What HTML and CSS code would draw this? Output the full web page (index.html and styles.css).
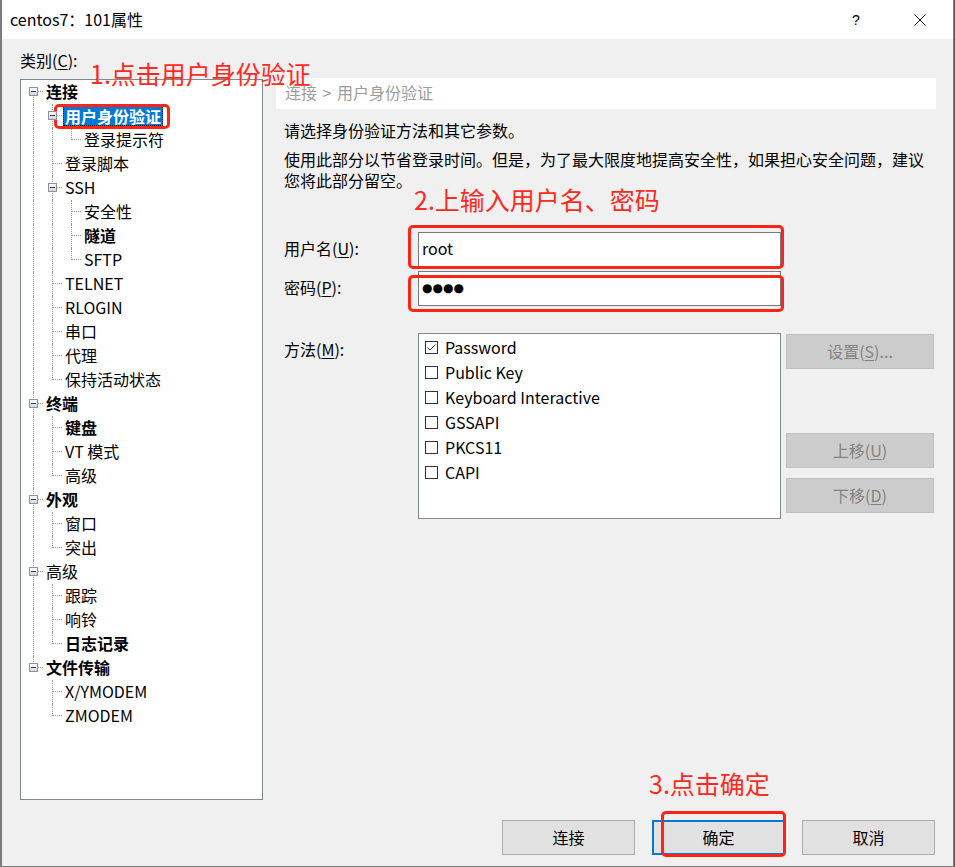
FILE: index.html
```html
<!DOCTYPE html>
<html lang="zh-CN">
<head>
<meta charset="utf-8">
<title>centos7：101属性</title>
<link rel="stylesheet" href="styles.css">
</head>
<body>
<div class="window">
  <div class="titlebar">
    <span class="title">centos7：101属性</span>
    <div class="tb-controls">
      <span class="tb-btn help">?</span>
      <span class="tb-btn close"><svg width="12" height="12" viewBox="0 0 12 12"><path d="M0.5 0.5 L11.5 11.5 M11.5 0.5 L0.5 11.5" stroke="#111" stroke-width="1" fill="none"/></svg></span>
    </div>
  </div>

  <div class="content">
    <div class="main">
      <div class="left">
        <div class="cat-label">类别(<u>C</u>):</div>
        <div class="tree">
          <div class="row"><span class="c f"><i class="box"></i></span><span class="lbl b">连接</span></div>
          <div class="row"><span class="c v"></span><span class="c t"><i class="box"></i></span><span class="lbl b sel">用户身份验证</span></div>
          <div class="row"><span class="c v"></span><span class="c v"></span><span class="c l"></span><span class="lbl">登录提示符</span></div>
          <div class="row"><span class="c v"></span><span class="c t"></span><span class="lbl">登录脚本</span></div>
          <div class="row"><span class="c v"></span><span class="c t"><i class="box"></i></span><span class="lbl">SSH</span></div>
          <div class="row"><span class="c v"></span><span class="c v"></span><span class="c t"></span><span class="lbl">安全性</span></div>
          <div class="row"><span class="c v"></span><span class="c v"></span><span class="c t"></span><span class="lbl b">隧道</span></div>
          <div class="row"><span class="c v"></span><span class="c v"></span><span class="c l"></span><span class="lbl">SFTP</span></div>
          <div class="row"><span class="c v"></span><span class="c t"></span><span class="lbl">TELNET</span></div>
          <div class="row"><span class="c v"></span><span class="c t"></span><span class="lbl">RLOGIN</span></div>
          <div class="row"><span class="c v"></span><span class="c t"></span><span class="lbl">串口</span></div>
          <div class="row"><span class="c v"></span><span class="c t"></span><span class="lbl">代理</span></div>
          <div class="row"><span class="c v"></span><span class="c l"></span><span class="lbl">保持活动状态</span></div>
          <div class="row"><span class="c t"><i class="box"></i></span><span class="lbl b">终端</span></div>
          <div class="row"><span class="c v"></span><span class="c t"></span><span class="lbl b">键盘</span></div>
          <div class="row"><span class="c v"></span><span class="c t"></span><span class="lbl">VT 模式</span></div>
          <div class="row"><span class="c v"></span><span class="c l"></span><span class="lbl">高级</span></div>
          <div class="row"><span class="c t"><i class="box"></i></span><span class="lbl b">外观</span></div>
          <div class="row"><span class="c v"></span><span class="c t"></span><span class="lbl">窗口</span></div>
          <div class="row"><span class="c v"></span><span class="c l"></span><span class="lbl">突出</span></div>
          <div class="row"><span class="c t"><i class="box"></i></span><span class="lbl">高级</span></div>
          <div class="row"><span class="c v"></span><span class="c t"></span><span class="lbl">跟踪</span></div>
          <div class="row"><span class="c v"></span><span class="c t"></span><span class="lbl">响铃</span></div>
          <div class="row"><span class="c v"></span><span class="c l"></span><span class="lbl b">日志记录</span></div>
          <div class="row"><span class="c l"><i class="box"></i></span><span class="lbl b">文件传输</span></div>
          <div class="row"><span class="c"></span><span class="c t"></span><span class="lbl">X/YMODEM</span></div>
          <div class="row"><span class="c"></span><span class="c l"></span><span class="lbl">ZMODEM</span></div>
        </div>
      </div>

      <div class="right">
        <div class="crumb">连接 &gt; 用户身份验证</div>
        <div class="pane">
          <p class="desc1">请选择身份验证方法和其它参数。</p>
          <div class="desc2">
            <span class="dline">使用此部分以节省登录时间。但是，为了最大限度地提高安全性，如果担心安全问题，建议</span>
            <span class="dline">您将此部分留空。</span>
          </div>
          <div class="frow user">
            <label class="flabel">用户名(<u>U</u>):</label>
            <div class="input"><span class="val">root</span></div>
          </div>
          <div class="frow pwd">
            <label class="flabel">密码(<u>P</u>):</label>
            <div class="input"><span class="dots">●●●●</span></div>
          </div>
          <div class="frow method">
            <label class="flabel mlabel">方法(<u>M</u>):</label>
            <div class="listbox">
              <div class="li"><span class="cb"><svg width="11" height="11" viewBox="0 0 11 11"><path d="M1.5 5.5 L4 8 L9.5 2.5" stroke="#333" stroke-width="1" fill="none"/></svg></span><span>Password</span></div>
              <div class="li"><span class="cb"></span><span>Public Key</span></div>
              <div class="li"><span class="cb"></span><span>Keyboard Interactive</span></div>
              <div class="li"><span class="cb"></span><span>GSSAPI</span></div>
              <div class="li"><span class="cb"></span><span>PKCS11</span></div>
              <div class="li"><span class="cb"></span><span>CAPI</span></div>
            </div>
            <div class="side-btns">
              <button class="dbtn">设置(<u>S</u>)...</button>
              <button class="dbtn move-up">上移(<u>U</u>)</button>
              <button class="dbtn">下移(<u>D</u>)</button>
            </div>
          </div>
        </div>
      </div>
    </div>

    <div class="footer">
      <button class="btn">连接</button>
      <button class="btn default">确定</button>
      <button class="btn">取消</button>
    </div>
  </div>

  <div class="ann ann1">1.点击用户身份验证</div>
  <div class="ann ann2">2.上输入用户名、密码</div>
  <div class="ann ann3">3.点击确定</div>
  <div class="redbox rb1"></div>
  <div class="redbox rb2"></div>
  <div class="redbox rb3"></div>
  <div class="redbox rb4"></div>
</div>
</body>
</html>
```

FILE: styles.css
```css
* { box-sizing: border-box; }
html, body { margin: 0; padding: 0; }
body {
  background: #5a5a5a;
  font-family: "Noto Sans CJK SC", "Noto Sans", sans-serif;
  font-size: 16px;
  color: #000;
}
u { text-decoration: underline; text-underline-offset: 2px; }

.window {
  position: relative;
  width: 954px;
  height: 867px;
  background: #f0f0f0;
  border-left: 2px solid #7c7c7c;
  border-right: 1px solid #7c7c7c;
  border-bottom: 1px solid #7c7c7c;
  display: flex;
  flex-direction: column;
}

/* title bar */
.titlebar {
  flex: none;
  height: 39px;
  background: #fff;
  display: flex;
  align-items: center;
  padding-left: 8px;
}
.title { font-size: 16px; line-height: 20px; padding-bottom: 2px; }
.tb-controls { margin-left: auto; display: flex; align-items: center; }
.tb-btn { width: 46px; height: 39px; display: flex; align-items: center; justify-content: center; }
.help { font-family: "Liberation Sans", sans-serif; font-size: 14px; margin-right: 18px; }
.close { margin-right: 10px; }

/* content */
.content {
  flex: 1;
  padding: 12px 17px 0 18px;
  display: flex;
  flex-direction: column;
}
.main { display: flex; gap: 13px; align-items: flex-start; }
.left { width: 243px; flex: none; }
.cat-label { height: 20px; line-height: 18px; margin-bottom: 8px; }

/* tree */
.tree {
  height: 721px;
  background: #fff;
  border: 1px solid #828790;
  padding-left: 3px;
  overflow: hidden;
}
.row { display: flex; height: 24px; align-items: center; }
.c { position: relative; width: 19px; height: 24px; flex: none; }
.c.v::before, .c.t::before {
  content: ""; position: absolute; left: 9px; top: 0; bottom: 0;
  border-left: 1px dotted #9a9a9a;
}
.c.l::before {
  content: ""; position: absolute; left: 9px; top: 0; height: 12px;
  border-left: 1px dotted #9a9a9a;
}
.c.f::before {
  content: ""; position: absolute; left: 9px; top: 11px; bottom: 0;
  border-left: 1px dotted #9a9a9a;
}
.c.t::after, .c.l::after, .c.f::after {
  content: ""; position: absolute; left: 10px; right: 0; top: 11px;
  border-top: 1px dotted #9a9a9a;
}
.box {
  position: absolute; left: 5px; top: 7px; width: 9px; height: 9px; z-index: 1;
  border: 1px solid #919191;
  background: linear-gradient(#ffffff, #d8d8d8);
}
.box::before {
  content: ""; position: absolute; left: 1px; right: 1px; top: 3px; height: 1px;
  background: #1e3a8a;
}
.lbl { margin-left: 3px; line-height: 22px; padding-bottom: 2px; white-space: nowrap; }
.lbl.b { font-weight: 700; }
.lbl.sel {
  background: #0078d7; color: #fff;
  line-height: 20px; padding: 0 2px 0; margin-left: 1px; margin-bottom: 1px;
  outline: 1px dotted #222; outline-offset: -1px;
}

/* right */
.right { flex: 1; margin-top: 27px; }
.crumb {
  height: 31px; line-height: 29px; background: #fff;
  color: #9d9d9d; padding-left: 9px; word-spacing: 2px;
}
.pane { padding-left: 8px; }
.desc1 { margin: 11px 0 0; line-height: 21px; }
.desc2 {
  margin: 9px 0 0; line-height: 21px; height: 42px;
  font-family: "Liberation Sans", "Noto Sans CJK SC", sans-serif;
}
.dline { display: block; width: fit-content; white-space: nowrap; }
.frow { display: flex; align-items: center; }
.frow.user { margin-top: 40px; }
.frow.pwd { margin-top: 4px; }
.frow.method { margin-top: 27px; align-items: flex-start; gap: 5px; }
.flabel { width: 134px; flex: none; line-height: 20px; padding-bottom: 3px; }
.frow.method .flabel { margin-right: -5px; }
.mlabel { margin-top: 6px; }
.input {
  width: 363px; height: 35px; background: #fff;
  border: 1px solid #7a7a7a; padding: 0 0 3px 3px;
  display: flex; align-items: center;
}
.dots { font-family: "DejaVu Sans", sans-serif; font-size: 12px; padding-top: 1px; }

.listbox {
  width: 363px; height: 186px; background: #fff;
  border: 1px solid #828790; padding: 1px 6px;
}
.li { display: flex; align-items: center; height: 25px; gap: 7px; }
.li span:last-child { line-height: 20px; padding-bottom: 2px; }
.cb {
  width: 13px; height: 13px; border: 1px solid #333; background: #fff; flex: none;
  display: flex; align-items: center; justify-content: center;
}
.cb svg { display: block; }

.side-btns { width: 148px; display: flex; flex-direction: column; padding-top: 1px; gap: 10px; }
.dbtn {
  height: 35px; width: 148px;
  background: #cccccc; border: 1px solid #bfbfbf; color: #838383;
  font: inherit; font-size: 16px; padding: 0 0 2px;
}
.dbtn.move-up { margin-top: 54px; }

/* footer */
.footer { margin-top: 20px; display: flex; justify-content: flex-end; gap: 17px; padding-right: 1px; }
.btn {
  width: 133px; height: 35px;
  background: #e1e1e1; border: 1px solid #adadad; color: #000;
  font: inherit; font-size: 16px; padding: 0 0 2px;
}
.btn.default { border: 2px solid #0078d7; }

/* annotations overlaid on the screenshot */
.ann {
  position: absolute; color: #ff2a22;
  font-size: 25px; line-height: 14px; white-space: nowrap;
}
.ann1 { left: 88px; top: 66px; }
.ann2 { left: 412px; top: 192px; }
.ann3 { left: 647px; top: 776px; }
.redbox {
  position: absolute; border: 3px solid #ff2418; border-radius: 5px;
}
.rb1 { left: 52px; top: 104px; width: 116px; height: 25px; }
.rb2 { left: 406px; top: 225px; width: 376px; height: 44px; }
.rb3 { left: 406px; top: 275px; width: 376px; height: 37px; }
.rb4 { left: 659px; top: 811px; width: 125px; height: 46px; }
```
